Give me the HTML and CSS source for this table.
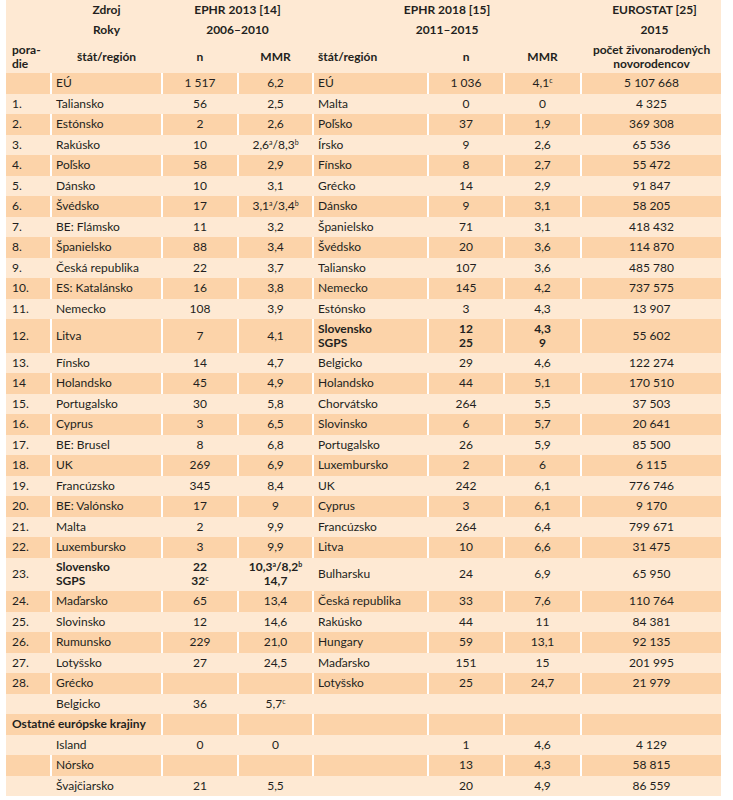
FILE: index.html
```html
<!DOCTYPE html>
<html lang="sk">
<head>
    <meta charset="UTF-8">
    <meta name="viewport" content="width=device-width, initial-scale=1.0">
    <title>MMR v Európe</title>
    <link rel="stylesheet" href="styles.css">
</head>
<body>
    <table class="mmr">
        <colgroup>
            <col class="c-rank">
            <col class="c-state">
            <col class="c-n">
            <col class="c-mmr">
            <col class="c-state2">
            <col class="c-n2">
            <col class="c-mmr2">
            <col class="c-births">
        </colgroup>
        <thead>
            <tr class="h-src">
                <td></td>
                <th>Zdroj</th>
                <th colspan="2">EPHR 2013 [14]</th>
                <th colspan="3">EPHR 2018 [15]</th>
                <th class="euro">EUROSTAT [25]</th>
            </tr>
            <tr class="h-src">
                <td></td>
                <th>Roky</th>
                <th colspan="2">2006–2010</th>
                <th colspan="3">2011–2015</th>
                <th class="euro">2015</th>
            </tr>
            <tr class="h-col">
                <th class="rank">pora-<br>die</th>
                <th>štát/región</th>
                <th>n</th>
                <th>MMR</th>
                <th class="state">štát/región</th>
                <th>n</th>
                <th>MMR</th>
                <th>počet živonarodených<br>novorodencov</th>
            </tr>
        </thead>
        <tbody>
            <tr class="alt"><td class="rank"></td><td class="state">EÚ</td><td>1 517</td><td>6,2</td><td class="state">EÚ</td><td>1 036</td><td>4,1<sup>c</sup></td><td>5 107 668</td></tr>
            <tr><td class="rank">1.</td><td class="state">Taliansko</td><td>56</td><td>2,5</td><td class="state">Malta</td><td>0</td><td>0</td><td>4 325</td></tr>
            <tr class="alt"><td class="rank">2.</td><td class="state">Estónsko</td><td>2</td><td>2,6</td><td class="state">Poľsko</td><td>37</td><td>1,9</td><td>369 308</td></tr>
            <tr><td class="rank">3.</td><td class="state">Rakúsko</td><td>10</td><td>2,6<sup>a</sup>/8,3<sup>b</sup></td><td class="state">Írsko</td><td>9</td><td>2,6</td><td>65 536</td></tr>
            <tr class="alt"><td class="rank">4.</td><td class="state">Poľsko</td><td>58</td><td>2,9</td><td class="state">Fínsko</td><td>8</td><td>2,7</td><td>55 472</td></tr>
            <tr><td class="rank">5.</td><td class="state">Dánsko</td><td>10</td><td>3,1</td><td class="state">Grécko</td><td>14</td><td>2,9</td><td>91 847</td></tr>
            <tr class="alt"><td class="rank">6.</td><td class="state">Švédsko</td><td>17</td><td>3,1<sup>a</sup>/3,4<sup>b</sup></td><td class="state">Dánsko</td><td>9</td><td>3,1</td><td>58 205</td></tr>
            <tr><td class="rank">7.</td><td class="state">BE: Flámsko</td><td>11</td><td>3,2</td><td class="state">Španielsko</td><td>71</td><td>3,1</td><td>418 432</td></tr>
            <tr class="alt"><td class="rank">8.</td><td class="state">Španielsko</td><td>88</td><td>3,4</td><td class="state">Švédsko</td><td>20</td><td>3,6</td><td>114 870</td></tr>
            <tr><td class="rank">9.</td><td class="state">Česká republika</td><td>22</td><td>3,7</td><td class="state">Taliansko</td><td>107</td><td>3,6</td><td>485 780</td></tr>
            <tr class="alt"><td class="rank">10.</td><td class="state">ES: Katalánsko</td><td>16</td><td>3,8</td><td class="state">Nemecko</td><td>145</td><td>4,2</td><td>737 575</td></tr>
            <tr><td class="rank">11.</td><td class="state">Nemecko</td><td>108</td><td>3,9</td><td class="state">Estónsko</td><td>3</td><td>4,3</td><td>13 907</td></tr>
            <tr class="alt tall"><td class="rank">12.</td><td class="state">Litva</td><td>7</td><td>4,1</td><td class="state bold">Slovensko<br>SGPS</td><td class="bold">12<br>25</td><td class="bold">4,3<br>9</td><td>55 602</td></tr>
            <tr><td class="rank">13.</td><td class="state">Fínsko</td><td>14</td><td>4,7</td><td class="state">Belgicko</td><td>29</td><td>4,6</td><td>122 274</td></tr>
            <tr class="alt"><td class="rank">14</td><td class="state">Holandsko</td><td>45</td><td>4,9</td><td class="state">Holandsko</td><td>44</td><td>5,1</td><td>170 510</td></tr>
            <tr><td class="rank">15.</td><td class="state">Portugalsko</td><td>30</td><td>5,8</td><td class="state">Chorvátsko</td><td>264</td><td>5,5</td><td>37 503</td></tr>
            <tr class="alt"><td class="rank">16.</td><td class="state">Cyprus</td><td>3</td><td>6,5</td><td class="state">Slovinsko</td><td>6</td><td>5,7</td><td>20 641</td></tr>
            <tr><td class="rank">17.</td><td class="state">BE: Brusel</td><td>8</td><td>6,8</td><td class="state">Portugalsko</td><td>26</td><td>5,9</td><td>85 500</td></tr>
            <tr class="alt"><td class="rank">18.</td><td class="state">UK</td><td>269</td><td>6,9</td><td class="state">Luxembursko</td><td>2</td><td>6</td><td>6 115</td></tr>
            <tr><td class="rank">19.</td><td class="state">Francúzsko</td><td>345</td><td>8,4</td><td class="state">UK</td><td>242</td><td>6,1</td><td>776 746</td></tr>
            <tr class="alt"><td class="rank">20.</td><td class="state">BE: Valónsko</td><td>17</td><td>9</td><td class="state">Cyprus</td><td>3</td><td>6,1</td><td>9 170</td></tr>
            <tr><td class="rank">21.</td><td class="state">Malta</td><td>2</td><td>9,9</td><td class="state">Francúzsko</td><td>264</td><td>6,4</td><td>799 671</td></tr>
            <tr class="alt"><td class="rank">22.</td><td class="state">Luxembursko</td><td>3</td><td>9,9</td><td class="state">Litva</td><td>10</td><td>6,6</td><td>31 475</td></tr>
            <tr class="tall"><td class="rank">23.</td><td class="state bold">Slovensko<br>SGPS</td><td class="bold">22<br>32<sup>c</sup></td><td class="bold">10,3<sup>a</sup>/8,2<sup>b</sup><br>14,7</td><td class="state">Bulharsku</td><td>24</td><td>6,9</td><td>65 950</td></tr>
            <tr class="alt"><td class="rank">24.</td><td class="state">Maďarsko</td><td>65</td><td>13,4</td><td class="state">Česká republika</td><td>33</td><td>7,6</td><td>110 764</td></tr>
            <tr><td class="rank">25.</td><td class="state">Slovinsko</td><td>12</td><td>14,6</td><td class="state">Rakúsko</td><td>44</td><td>11</td><td>84 381</td></tr>
            <tr class="alt"><td class="rank">26.</td><td class="state">Rumunsko</td><td>229</td><td>21,0</td><td class="state">Hungary</td><td>59</td><td>13,1</td><td>92 135</td></tr>
            <tr><td class="rank">27.</td><td class="state">Lotyšsko</td><td>27</td><td>24,5</td><td class="state">Maďarsko</td><td>151</td><td>15</td><td>201 995</td></tr>
            <tr class="alt"><td class="rank">28.</td><td class="state">Grécko</td><td></td><td></td><td class="state">Lotyšsko</td><td>25</td><td>24,7</td><td>21 979</td></tr>
            <tr><td class="rank"></td><td class="state">Belgicko</td><td>36</td><td>5,7<sup>c</sup></td><td class="state"></td><td></td><td></td><td></td></tr>
            <tr class="alt"><td class="group" colspan="2">Ostatné európske krajiny</td><td></td><td></td><td class="state"></td><td></td><td></td><td></td></tr>
            <tr><td class="rank"></td><td class="state">Island</td><td>0</td><td>0</td><td class="state"></td><td>1</td><td>4,6</td><td>4 129</td></tr>
            <tr class="alt"><td class="rank"></td><td class="state">Nórsko</td><td></td><td></td><td class="state"></td><td>13</td><td>4,3</td><td>58 815</td></tr>
            <tr><td class="rank"></td><td class="state">Švajčiarsko</td><td>21</td><td>5,5</td><td class="state"></td><td>20</td><td>4,9</td><td>86 559</td></tr>
        </tbody>
    </table>
</body>
</html>
```

FILE: styles.css
```css
body {
    margin: 0;
    background: #fff;
    font-family: Lato, "Open Sans", sans-serif;
    font-size: 12px;
    color: #231f20;
}
.mmr {
    margin-left: 6px;
    width: 715px;
    table-layout: fixed;
    border-collapse: separate;
    border-spacing: 0;
    background-color: #fee9d3;
}
.c-rank { width: 44px; }
.c-state { width: 111px; }
.c-n { width: 76px; }
.c-mmr { width: 75px; }
.c-state2 { width: 115px; }
.c-n2 { width: 76px; }
.c-mmr2 { width: 77px; }
.c-births { width: 141px; }
.mmr td,
.mmr th {
    padding: 0;
    line-height: 14px;
    height: 20.5px;
    text-align: center;
    vertical-align: middle;
    border-left: 2px solid transparent;
    white-space: nowrap;
}
.mmr td:first-child,
.mmr th:first-child {
    border-left: 0;
}
.mmr th {
    font-weight: bold;
}
.h-src th,
.h-src td {
    height: 20px;
}
.h-col th {
    height: 33px;
}
.mmr .euro {
    padding-left: 6px;
}
.mmr .rank {
    text-align: left;
    padding-left: 6px;
}
.mmr .state {
    text-align: left;
    padding-left: 4px;
}
.mmr .group {
    text-align: left;
    padding-left: 6px;
    font-weight: bold;
}
.mmr .bold {
    font-weight: bold;
}
.mmr tr.tall td {
    height: 33.5px;
}
.mmr tr.alt td {
    background-color: #fcd3a9;
    border-left-color: #fff;
}
.mmr tr.alt td:first-child {
    border-left: 0;
}
sup {
    font-size: 7px;
    line-height: 0;
    vertical-align: 4px;
}
```
